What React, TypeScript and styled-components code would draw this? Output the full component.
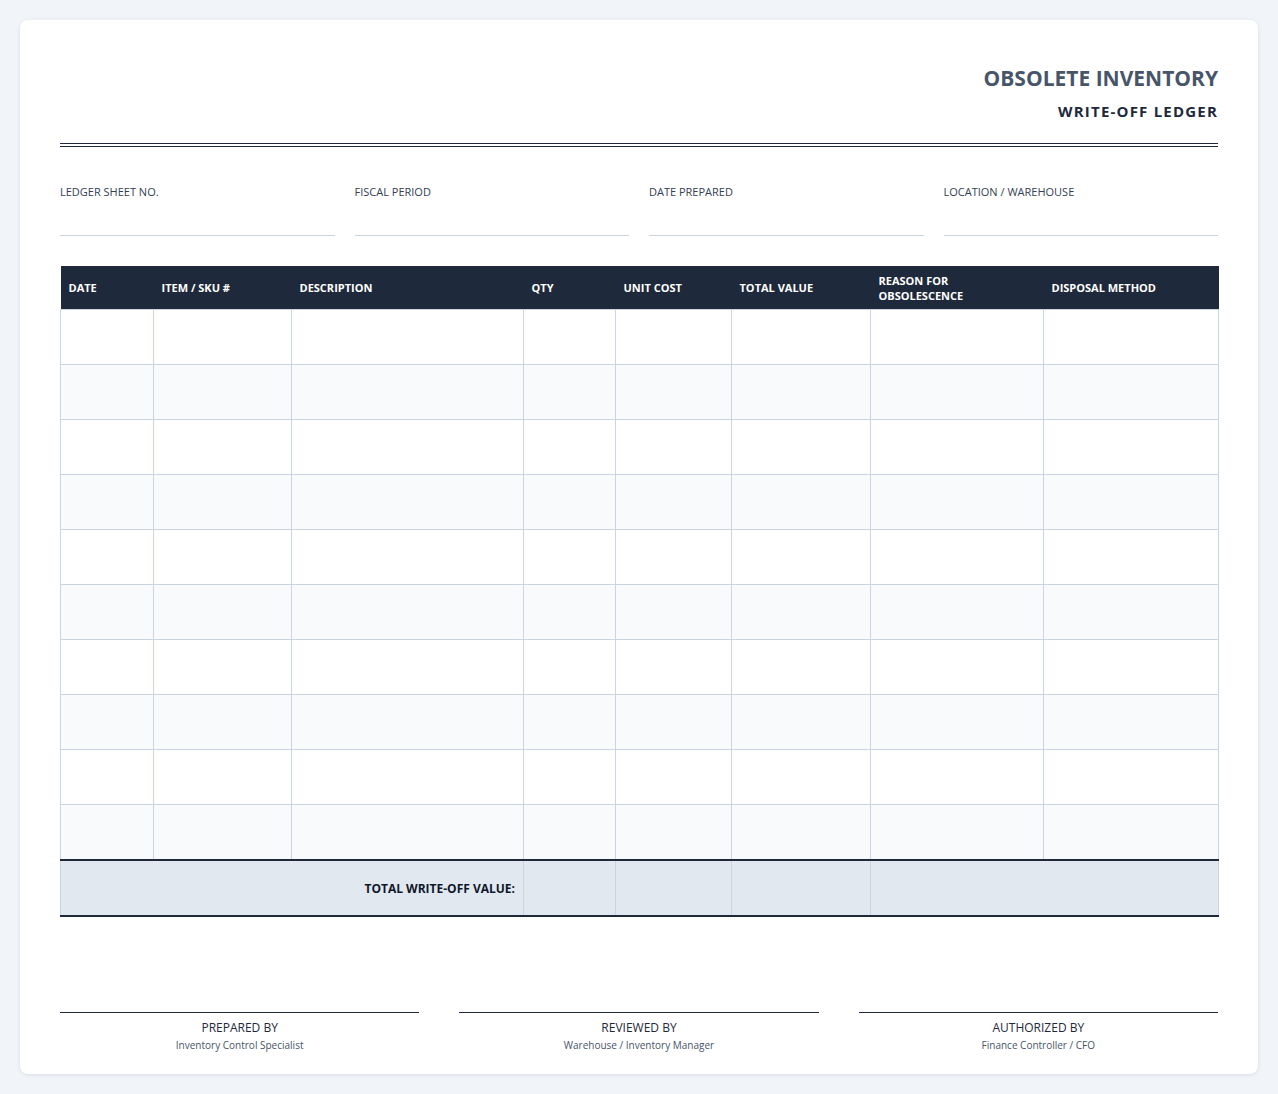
import React from 'react';
import styled, { createGlobalStyle } from 'styled-components';

const GlobalStyle = createGlobalStyle`
  body {
    margin: 0;
    background: #f1f5f9;
    font-family: "Open Sans", "Liberation Sans", sans-serif;
    color: #1e293b;
  }
`;

const Page = styled.div`
  padding: 20px;
`;

const Card = styled.div`
  background: #fff;
  border-radius: 8px;
  box-shadow: 0 1px 4px rgba(15, 23, 42, 0.1);
  padding: 40px 40px 40px;
  height: 974px;
`;

const Header = styled.div`
  text-align: right;
  padding-top: 3px;
  padding-bottom: 22px;
  border-bottom: 4px double #1e293b;
`;

const Title = styled.h1`
  margin: 0;
  font-size: 21px;
  font-weight: 700;
  color: #475569;
  line-height: 30px;
`;

const Subtitle = styled.h2`
  margin: 8px 0 0;
  font-size: 15px;
  font-weight: 700;
  letter-spacing: 1.2px;
  color: #1e293b;
  line-height: 20px;
`;

const Fields = styled.div`
  display: grid;
  grid-template-columns: repeat(4, 1fr);
  gap: 20px;
  margin-top: 37px;
`;

const Field = styled.div`
  border-bottom: 1px solid #cbd5e1;
  height: 51px;
`;

const FieldLabel = styled.div`
  font-size: 11px;
  color: #334155;
  line-height: 15px;
`;

const Table = styled.table`
  width: 100%;
  border-collapse: collapse;
  margin-top: 30px;
  table-layout: fixed;
`;

const Th = styled.th`
  background: #1e293b;
  color: #fff;
  font-size: 11px;
  font-weight: 700;
  text-align: left;
  padding: 0 8px;
  height: 43px;
`;

const Td = styled.td<{ $alt?: boolean }>`
  height: 52px;
  border: 1px solid #cbd5e1;
  background: ${({ $alt }) => ($alt ? '#f8fafc' : '#fff')};
`;

const TotalCell = styled.td<{ $label?: boolean }>`
  height: 52px;
  background: #e2e8f0;
  border: 1px solid #cbd5e1;
  border-top: 2px solid #1e293b;
  border-bottom: 2px solid #1e293b;
  text-align: right;
  padding-right: 8px;
  font-size: 12px;
  font-weight: 700;
  color: #0f172a;
`;

const Signatures = styled.div`
  display: grid;
  grid-template-columns: repeat(3, 1fr);
  gap: 40px;
  margin-top: 95px;
`;

const Signature = styled.div`
  border-top: 1px solid #1e293b;
  text-align: center;
  padding-top: 6px;
`;

const SigLabel = styled.div`
  font-size: 12px;
  color: #1e293b;
  line-height: 17px;
`;

const SigSub = styled.div`
  font-size: 10px;
  color: #475569;
  margin-top: 2px;
  line-height: 14px;
`;

const columns = [
  { name: 'DATE', w: 93 },
  { name: 'ITEM / SKU #', w: 138 },
  { name: 'DESCRIPTION', w: 232 },
  { name: 'QTY', w: 92 },
  { name: 'UNIT COST', w: 116 },
  { name: 'TOTAL VALUE', w: 139 },
  { name: 'REASON FOR OBSOLESCENCE', w: 173 },
  { name: 'DISPOSAL METHOD', w: 175 },
];

const fields = ['LEDGER SHEET NO.', 'FISCAL PERIOD', 'DATE PREPARED', 'LOCATION / WAREHOUSE'];

const signers = [
  { label: 'PREPARED BY', sub: 'Inventory Control Specialist' },
  { label: 'REVIEWED BY', sub: 'Warehouse / Inventory Manager' },
  { label: 'AUTHORIZED BY', sub: 'Finance Controller / CFO' },
];

export default function App() {
  return (
    <Page>
      <GlobalStyle />
      <Card>
        <Header>
          <Title>OBSOLETE INVENTORY</Title>
          <Subtitle>WRITE-OFF LEDGER</Subtitle>
        </Header>
        <Fields>
          {fields.map((f) => (
            <Field key={f}>
              <FieldLabel>{f}</FieldLabel>
            </Field>
          ))}
        </Fields>
        <Table>
          <colgroup>
            {columns.map((c) => (
              <col key={c.name} style={{ width: c.w }} />
            ))}
          </colgroup>
          <thead>
            <tr>
              {columns.map((c) => (
                <Th key={c.name}>{c.name}</Th>
              ))}
            </tr>
          </thead>
          <tbody>
            {Array.from({ length: 10 }).map((_, r) => (
              <tr key={r}>
                {columns.map((c) => (
                  <Td key={c.name} $alt={r % 2 === 1} />
                ))}
              </tr>
            ))}
            <tr>
              <TotalCell colSpan={3}>TOTAL WRITE-OFF VALUE:</TotalCell>
              <TotalCell />
              <TotalCell />
              <TotalCell />
              <TotalCell colSpan={2} />
            </tr>
          </tbody>
        </Table>
        <Signatures>
          {signers.map((s) => (
            <Signature key={s.label}>
              <SigLabel>{s.label}</SigLabel>
              <SigSub>{s.sub}</SigSub>
            </Signature>
          ))}
        </Signatures>
      </Card>
    </Page>
  );
}
